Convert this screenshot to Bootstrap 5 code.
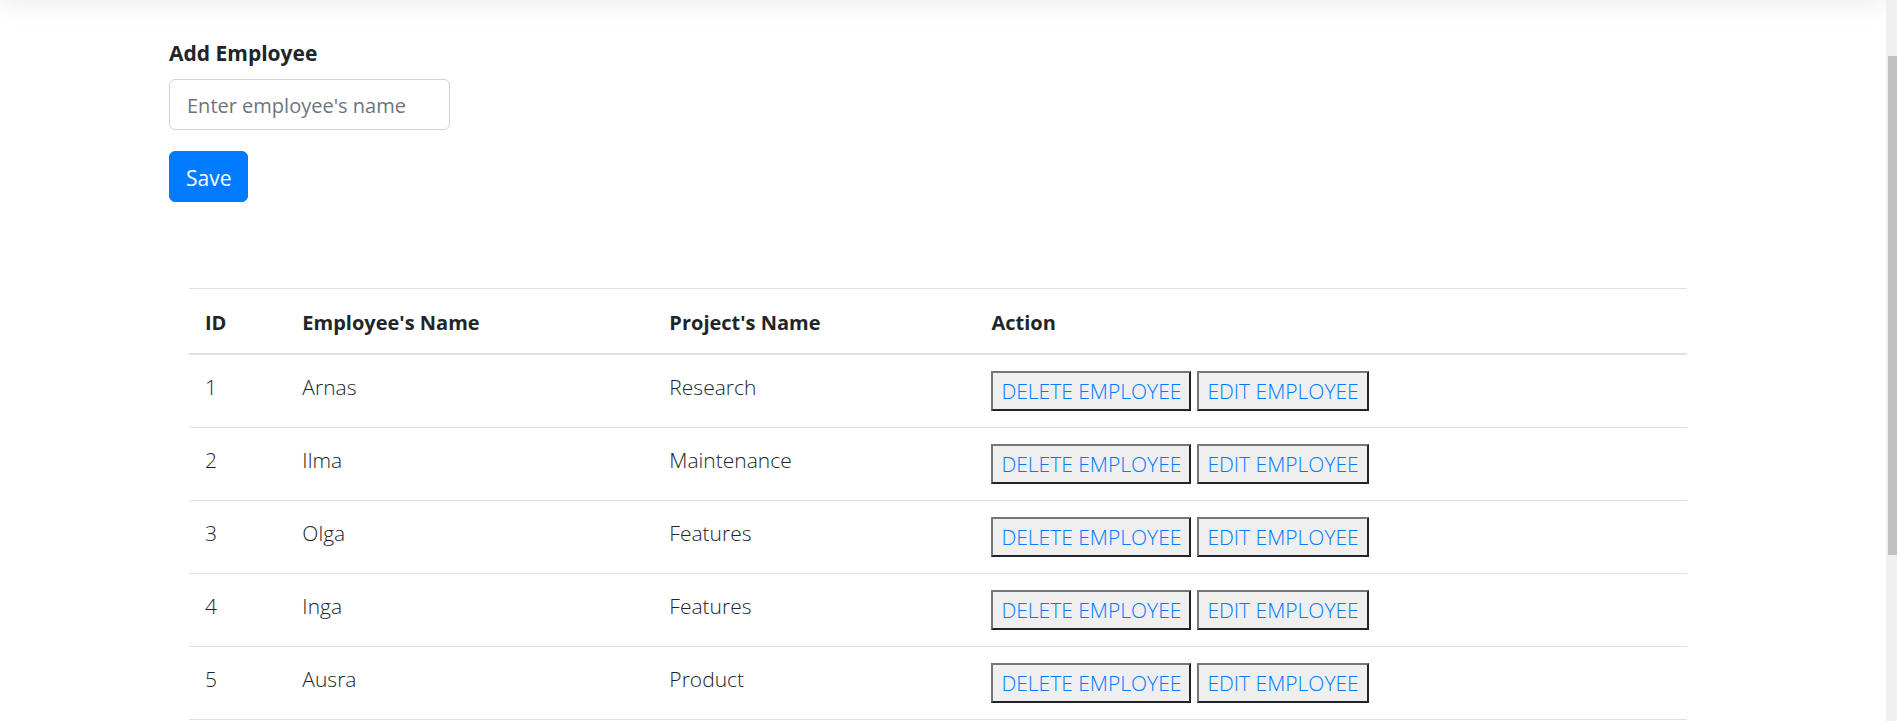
<!DOCTYPE html>
<html lang="en">
<head>
<meta charset="utf-8">
<meta name="viewport" content="width=device-width, initial-scale=1">
<title>Employees</title>
<link rel="stylesheet" href="https://cdn.jsdelivr.net/npm/bootstrap@5.3.0/dist/css/bootstrap.min.css">
<style>
  body { font-family: "Open Sans", "Noto Sans", sans-serif; font-size: 21px; line-height: 33px; color: #212529; }
  .page-header { height: 80px; margin-top: -80px; box-shadow: 0 0 32px 0 rgba(0,0,0,.1); }
  .page-area { min-width: 0; overflow: hidden; }
  .page-body { max-width: 1590px; padding: 37px 21px 0; }
  .employee-form { max-width: 281px; }
  .employee-form .form-label { font-weight: 700; margin-bottom: 9px; }
  .employee-form .form-control { font-size: 20px; line-height: 33px; padding: 9px 17px 7px; border-color: #ced4da; border-radius: 6px; margin-bottom: 21px; }
  .employee-form .form-control::placeholder { color: #6c757d; }
  .employee-form .btn { --bs-btn-bg: #007bff; --bs-btn-border-color: #007bff; font-size: 21px; line-height: 33px; padding: 10px 16px 6px; border-radius: 6px; }
  .table-area { margin: 86px 30px 0 20px; }
  .employee-table { table-layout: fixed; --bs-table-color: #212529; border-top: 1px solid #dee2e6; font-weight: 300; }
  .employee-table > :not(caption) > * > * { padding: 16px; height: 73px; border-bottom: 1px solid #dee2e6; }
  .employee-table > thead > tr > th { font-size: 20px; font-weight: 700; height: 65px; padding-bottom: 14px; border-bottom-width: 2px; }
  .col-id { width: 6.5%; }
  .col-name { width: 24.5%; }
  .col-project { width: 21.5%; }
  .row-actions { gap: 6px; }
  .row-actions button { background: #efefef; border: 2px solid; border-color: #767676 #212529 #212529 #767676; color: #007bff; text-transform: uppercase; font-weight: 300; line-height: 33px; padding: 2px 8px 1px; white-space: nowrap; }
  .scroll-track { width: 11px; background: #f0f0f0; padding: 56px 0 0 2px; }
  .scroll-thumb { height: 75%; background: #c1c1c1; }
</style>
</head>
<body>
<div class="d-flex vh-100 overflow-hidden">
  <div class="page-area flex-grow-1">
    <header class="page-header"></header>
    <main class="page-body container-fluid mx-auto">
      <form class="employee-form">
        <label class="form-label d-block" for="employeeName">Add Employee</label>
        <input class="form-control" type="text" id="employeeName" placeholder="Enter employee's name">
        <button class="btn btn-primary" type="submit">Save</button>
      </form>
      <div class="table-area">
        <table class="table employee-table mb-0">
          <thead>
            <tr><th class="col-id" scope="col">ID</th><th class="col-name" scope="col">Employee's Name</th><th class="col-project" scope="col">Project's Name</th><th scope="col">Action</th></tr>
          </thead>
          <tbody>
            <tr><td>1</td><td>Arnas</td><td>Research</td><td><div class="row-actions d-flex"><button type="button">Delete Employee</button><button type="button">Edit Employee</button></div></td></tr>
            <tr><td>2</td><td>Ilma</td><td>Maintenance</td><td><div class="row-actions d-flex"><button type="button">Delete Employee</button><button type="button">Edit Employee</button></div></td></tr>
            <tr><td>3</td><td>Olga</td><td>Features</td><td><div class="row-actions d-flex"><button type="button">Delete Employee</button><button type="button">Edit Employee</button></div></td></tr>
            <tr><td>4</td><td>Inga</td><td>Features</td><td><div class="row-actions d-flex"><button type="button">Delete Employee</button><button type="button">Edit Employee</button></div></td></tr>
            <tr><td>5</td><td>Ausra</td><td>Product</td><td><div class="row-actions d-flex"><button type="button">Delete Employee</button><button type="button">Edit Employee</button></div></td></tr>
          </tbody>
        </table>
      </div>
    </main>
  </div>
  <div class="scroll-track flex-shrink-0" aria-hidden="true">
    <div class="scroll-thumb"></div>
  </div>
</div>
<script src="https://cdn.jsdelivr.net/npm/bootstrap@5.3.0/dist/js/bootstrap.bundle.min.js"></script>
</body>
</html>
